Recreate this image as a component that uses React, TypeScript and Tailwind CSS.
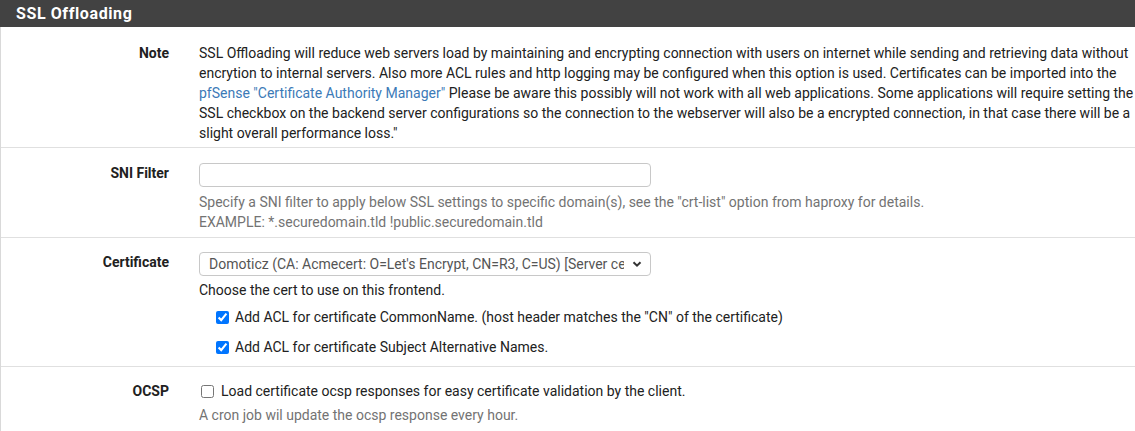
import React from 'react';

const Label: React.FC<{ text: string }> = ({ text }) => (
  <div className="w-[183px] shrink-0 pr-[15px] text-right font-bold text-[14px] text-[#212121]">{text}</div>
);

const Row: React.FC<{ label: string; className?: string; children: React.ReactNode }> = ({ label, className, children }) => (
  <div className={`flex border-b border-[#e0e0e0] ${className || ''}`}>
    <Label text={label} />
    <div className="flex-1 pl-[15px]">{children}</div>
  </div>
);

const Checkbox: React.FC<{ checked?: boolean }> = ({ checked }) => (
  <input type="checkbox" defaultChecked={checked} className="m-0 h-[13px] w-[13px] shrink-0" />
);

export default function App() {
  return (
    <div className="w-[1135px] h-[431px] overflow-hidden bg-white text-[14px] leading-[20px] text-[#212121]" style={{ fontFamily: 'Roboto, "Liberation Sans", sans-serif' }}>
      <div className="h-[27px] bg-[#424242] pl-4 flex items-center">
        <h2 className="text-white font-bold text-[16px] tracking-[0.6px]">SSL Offloading</h2>
      </div>

      <div className="border-l border-[#d9d9d9]">
        <Row label="Note" className="pt-[16px] pb-[4px]">
          <p>
            SSL Offloading will reduce web servers load by maintaining and encrypting connection with users on internet while sending and retrieving data without encrytion to internal servers. Also more ACL rules and http logging may be configured when this option is used. Certificates can be imported into the{' '}
            <a className="text-[#3c7ab7]">pfSense "Certificate Authority Manager"</a> Please be aware this possibly will not work with all web applications. Some applications will require setting the SSL checkbox on the backend server configurations so the connection to the webserver will also be a encrypted connection, in that case there will be a slight overall performance loss."
          </p>
        </Row>

        <Row label="SNI Filter" className="pt-[15px] pb-[5px]">
          <input type="text" className="block w-[452px] h-[24px] rounded-[4px] border border-[#c8c8c8] px-2" />
          <div className="mt-[5px] text-[#737373]">
            <div>Specify a SNI filter to apply below SSL settings to specific domain(s), see the "crt-list" option from haproxy for details.</div>
            <div>EXAMPLE: *.securedomain.tld !public.securedomain.tld</div>
          </div>
        </Row>

        <Row label="Certificate" className="pt-[14px] pb-[9px]">
          <div className="flex items-center w-[452px] h-[24px] rounded-[4px] border border-[#c8c8c8] pl-[9px] pr-[8px] text-[#555]">
            <span className="flex-1 overflow-hidden whitespace-nowrap">Domoticz (CA: Acmecert: O=Let's Encrypt, CN=R3, C=US) [Server ce</span>
            <svg width="10" height="10" viewBox="0 0 10 10" className="ml-2 shrink-0">
              <path d="M1.5 3.2 L5 6.7 L8.5 3.2" fill="none" stroke="#333" strokeWidth="2" />
            </svg>
          </div>
          <div className="mt-[4px]">Choose the cert to use on this frontend.</div>
          <div className="flex items-center gap-[6px] pl-[17px] mt-[7px]">
            <Checkbox checked />
            <span>Add ACL for certificate CommonName. (host header matches the "CN" of the certificate)</span>
          </div>
          <div className="flex items-center gap-[6px] pl-[17px] mt-[10px]">
            <Checkbox checked />
            <span>Add ACL for certificate Subject Alternative Names.</span>
          </div>
        </Row>

        <Row label="OCSP" className="pt-[14px] pb-[7px]">
          <div className="flex items-center gap-[7px] pl-[2px]">
            <Checkbox />
            <span>Load certificate ocsp responses for easy certificate validation by the client.</span>
          </div>
          <div className="mt-[4px] text-[#737373]">A cron job wil update the ocsp response every hour.</div>
        </Row>
      </div>
    </div>
  );
}
